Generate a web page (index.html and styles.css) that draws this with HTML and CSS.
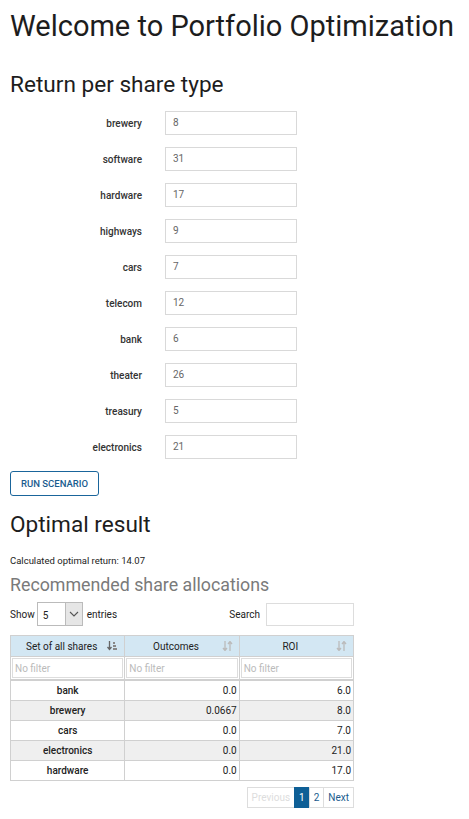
FILE: index.html
```html
<!DOCTYPE html>
<html>
<head>
<meta charset="utf-8">
<link rel="stylesheet" href="styles.css">
</head>
<body>
<div class="page">
  <h1 class="title">Welcome to Portfolio Optimization</h1>
  <h2 class="section">Return per share type</h2>
  <div class="form">
    <div class="row"><label>brewery</label><div class="inp">8</div></div>
    <div class="row"><label>software</label><div class="inp">31</div></div>
    <div class="row"><label>hardware</label><div class="inp">17</div></div>
    <div class="row"><label>highways</label><div class="inp">9</div></div>
    <div class="row"><label>cars</label><div class="inp">7</div></div>
    <div class="row"><label>telecom</label><div class="inp">12</div></div>
    <div class="row"><label>bank</label><div class="inp">6</div></div>
    <div class="row"><label>theater</label><div class="inp">26</div></div>
    <div class="row"><label>treasury</label><div class="inp">5</div></div>
    <div class="row"><label>electronics</label><div class="inp">21</div></div>
  </div>
  <button class="run">RUN SCENARIO</button>
  <h2 class="section result">Optimal result</h2>
  <p class="calc">Calculated optimal return: 14.07</p>
  <h3 class="rec">Recommended share allocations</h3>
  <div class="controls">
    <div class="show">Show
      <div class="select"><span class="val">5</span><span class="arrow"><svg width="10" height="6" viewBox="0 0 10 6"><path d="M1 1l4 4 4-4" fill="none" stroke="#555" stroke-width="1.1"/></svg></span></div>
      entries</div>
    <div class="search">Search <div class="sbox"></div></div>
  </div>
  <table class="grid">
    <thead>
      <tr class="head">
        <th>Set of all shares<span class="sort active"><svg width="11" height="10" viewBox="0 0 11 10"><path d="M2.5 0v8M0.5 6l2 2.5 2-2.5" fill="none" stroke="#666" stroke-width="1.3"/><rect x="6" y="1" width="2" height="2" fill="#888"/><rect x="6" y="4" width="3" height="2" fill="#888"/><rect x="6" y="7" width="4" height="2" fill="#888"/></svg></span></th>
        <th>Outcomes<span class="sort"><svg width="11" height="10" viewBox="0 0 11 10"><path d="M3 0v9M1 7l2 2.5 2-2.5M8 10V1M6 3l2-2.5 2 2.5" fill="none" stroke="#bbb" stroke-width="1.3"/></svg></span></th>
        <th>ROI<span class="sort"><svg width="11" height="10" viewBox="0 0 11 10"><path d="M3 0v9M1 7l2 2.5 2-2.5M8 10V1M6 3l2-2.5 2 2.5" fill="none" stroke="#bbb" stroke-width="1.3"/></svg></span></th>
      </tr>
      <tr class="filters">
        <td><div class="filter">No filter</div></td>
        <td><div class="filter">No filter</div></td>
        <td><div class="filter">No filter</div></td>
      </tr>
    </thead>
    <tbody>
      <tr><td class="name">bank</td><td class="num">0.0</td><td class="num">6.0</td></tr>
      <tr class="alt"><td class="name">brewery</td><td class="num">0.0667</td><td class="num">8.0</td></tr>
      <tr><td class="name">cars</td><td class="num">0.0</td><td class="num">7.0</td></tr>
      <tr class="alt"><td class="name">electronics</td><td class="num">0.0</td><td class="num">21.0</td></tr>
      <tr><td class="name">hardware</td><td class="num">0.0</td><td class="num">17.0</td></tr>
    </tbody>
  </table>
  <div class="pager">
    <span class="pg disabled">Previous</span><span class="pg current">1</span><span class="pg">2</span><span class="pg">Next</span>
  </div>
</div>
</body>
</html>
```
FILE: styles.css
```css
* { box-sizing: border-box; }
body {
  margin: 0;
  font-family: Roboto, "Liberation Sans", sans-serif;
  color: #222;
  background: #fff;
}
.page { padding: 0 10px; width: 364px; }
.title {
  margin: 0;
  padding-top: 6px;
  font-size: 29px;
  font-weight: 400;
  line-height: 40px;
  white-space: nowrap;
  color: #1d1d1d;
}
.section {
  margin: 26px 0 0;
  font-size: 22.6px;
  font-weight: 400;
  line-height: 26px;
  color: #1d1d1d;
  white-space: nowrap;
}
.form { margin-top: 13px; }
.row {
  display: flex;
  align-items: center;
  height: 24px;
  margin-bottom: 12px;
}
.row label {
  width: 132px;
  text-align: right;
  font-size: 10px;
  font-weight: 500;
  color: #333;
}
.inp {
  margin-left: 23px;
  width: 132px;
  height: 24px;
  border: 1px solid #d9d9d9;
  font-size: 10px;
  color: #666;
  line-height: 22px;
  padding-left: 7px;
}
.run {
  display: block;
  margin-top: 1px;
  width: 89px;
  height: 25px;
  border: 1px solid #1a659b;
  border-radius: 3px;
  background: #fff;
  color: #1a5c8e;
  font-family: Roboto, "Liberation Sans", sans-serif;
  font-size: 9.5px;
  font-weight: 500;
  padding: 0;
}
.result { margin-top: 16px; }
.calc {
  margin: 16px 0 0;
  font-size: 9.5px;
  color: #222;
  line-height: 14px;
}
.rec {
  margin: 4px 0 0;
  font-size: 17.8px;
  font-weight: 400;
  color: #7a7a7a;
  line-height: 26px;
  white-space: nowrap;
}
.controls {
  display: flex;
  justify-content: space-between;
  align-items: center;
  margin-top: 4px;
  width: 344px;
  font-size: 10px;
  color: #222;
}
.show { display: flex; align-items: center; }
.select {
  display: flex;
  width: 46px;
  height: 24px;
  margin: 0 4px 0 2px;
  border: 1px solid #bbb;
}
.select .val { flex: 1; padding: 7px 0 0 5px; font-size: 10px; }
.select .arrow {
  width: 17px;
  background: #e6e6e6;
  border-left: 1px solid #bbb;
  display: flex;
  align-items: center;
  justify-content: center;
}
.search { display: flex; align-items: center; }
.sbox {
  width: 88px;
  height: 23px;
  margin-left: 6px;
  border: 1px solid #ddd;
}
.grid {
  margin-top: 9px;
  width: 344px;
  border-collapse: collapse;
  font-size: 10px;
  table-layout: fixed;
}
.grid th, .grid td { border: 1px solid #d0d0d0; }
.grid .head th {
  background: #d3e7f3;
  height: 21px;
  font-weight: 400;
  color: #222;
  position: relative;
  padding: 0 12px 0 0;
}
.sort {
  position: absolute;
  right: 6px;
  top: 5px;
  line-height: 0;
}
.filters td { padding: 1px; height: 23px; }
.filter {
  border: 1px solid #ddd;
  height: 20px;
  font-size: 10px;
  color: #bbb;
  padding: 4px 0 0 2px;
  background: #fff;
}
.grid tbody td { height: 20px; padding: 0 2px; color: #222; }
.grid tbody tr:first-child td { border-top: 2px solid #d0d0d0; }
.name { text-align: center; font-weight: 500; }
.num { text-align: right; }
.alt td { background: #efefef; }
.pager {
  display: flex;
  justify-content: flex-end;
  width: 344px;
  margin-top: 6px;
}
.pg {
  font-size: 10px;
  height: 21px;
  line-height: 19px;
  padding: 0 4px;
  border: 1px solid #ddd;
  margin-left: -1px;
  color: #1a5c8e;
}
.pg.disabled { color: #ddd; }
.pg.current { background: #0e5f96; color: #fff; border-color: #0e5f96; }
```
